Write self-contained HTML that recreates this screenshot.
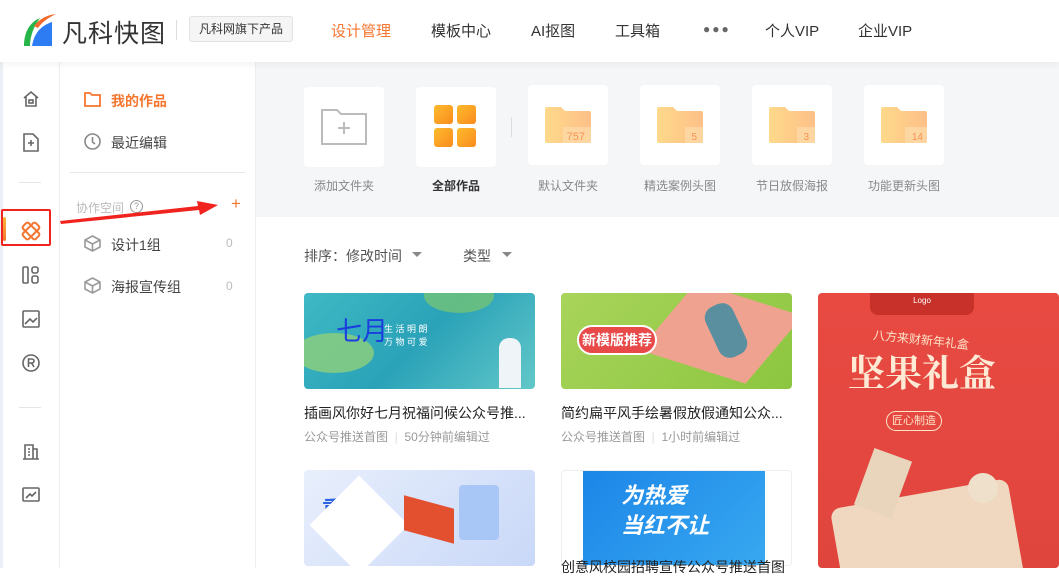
<!DOCTYPE html><html><head><meta charset="utf-8"><style>
*{margin:0;padding:0;box-sizing:border-box}
body{width:1059px;height:568px;overflow:hidden;background:#fff;font-family:"Liberation Sans","Noto Sans CJK SC",sans-serif;position:relative;color:#333}
.a{position:absolute}
.hdr{left:0;top:0;width:1059px;height:62px;background:#fff;box-shadow:0 2px 8px rgba(0,0,0,.06);z-index:2}
.nav{top:20px;font-size:15px;color:#333}
.tile{width:80px;height:80px;background:#fff;border-radius:4px;top:87px}
.tl{top:177px;font-size:12px;color:#888;width:110px;text-align:center}
.card{border-radius:4px;overflow:hidden}
.t{font-size:14px;color:#222}
.m{font-size:12px;color:#999}
</style></head><body>
<div class="a hdr">
<svg class="a" style="left:18px;top:12px" width="40" height="36" viewBox="0 0 40 36"><path d="M6 34 C6 20 12 10 22 6 C16 14 12 24 12 34Z" fill="#27b54a"/><path d="M14 34 C16 22 22 14 34 10 L34 34Z" fill="#2d7cf3"/><path d="M16 14 C22 6 30 3 38 2 C30 6 24 10 20 16Z" fill="#f26b2c"/></svg>
<div class="a" style="left:62px;top:14px;font-size:25px;color:#333;letter-spacing:1px">凡科快图</div>
<div class="a" style="left:176px;top:20px;width:1px;height:20px;background:#ddd"></div>
<div class="a" style="left:189px;top:16px;width:104px;height:26px;border:1px solid #e2e2e2;border-radius:3px;background:#f5f5f5;font-size:12px;line-height:24px;text-align:center;color:#333">凡科网旗下产品</div>
<div class="a nav" style="left:331px;color:#f5762f">设计管理</div>
<div class="a nav" style="left:431px">模板中心</div>
<div class="a nav" style="left:531px">AI抠图</div>
<div class="a nav" style="left:615px">工具箱</div>
<div class="a" style="left:703px;top:22px;font-size:12px;letter-spacing:2px;color:#666">●●●</div>
<div class="a nav" style="left:765px">个人VIP</div>
<div class="a nav" style="left:858px">企业VIP</div>
</div>
<div class="a" style="left:0;top:62px;width:3px;height:506px;background:#eceef5"></div>
<div class="a" style="left:59px;top:62px;width:1px;height:506px;background:#eee"></div>
<div class="a" style="left:255px;top:62px;width:1px;height:506px;background:#eee"></div>
<div class="a" style="left:256px;top:62px;width:803px;height:155px;background:#f5f6f8"></div>
<svg class="a" style="left:22px;top:90px" width="18" height="18" viewBox="0 0 18 18" fill="none" stroke="#666" stroke-width="1.6"><path d="M2 8 L9 2 L16 8 M4 7 V16 H14 V7"/><rect x="7" y="10" width="4" height="3"/></svg>
<svg class="a" style="left:23px;top:133px" width="16" height="19" viewBox="0 0 16 19" fill="none" stroke="#666" stroke-width="1.6"><path d="M1 1 H10 L15 6 V18 H1Z M5 10 H11 M8 7 V13"/></svg>
<div class="a" style="left:19px;top:182px;width:22px;height:1px;background:#e5e5e5"></div>
<div class="a" style="left:1px;top:209px;width:50px;height:37px;border:2px solid #f0231f;border-radius:2px"></div>
<div class="a" style="left:3px;top:217px;width:3px;height:24px;background:linear-gradient(#f7b53a,#f5762f);border-radius:2px"></div>
<svg class="a" style="left:21px;top:221px" width="20" height="20" viewBox="0 0 20 20" fill="none" stroke="#f5762f" stroke-width="2"><rect x="6" y="1" width="8" height="18" rx="2" transform="rotate(45 10 10)"/><rect x="6" y="1" width="8" height="18" rx="2" transform="rotate(-45 10 10)"/></svg>
<svg class="a" style="left:22px;top:266px" width="18" height="18" viewBox="0 0 18 18" fill="none" stroke="#666" stroke-width="1.6"><rect x="1" y="1" width="5" height="16" rx="1"/><rect x="10" y="1" width="6" height="6" rx="2"/><rect x="10" y="10" width="6" height="7" rx="2"/></svg>
<svg class="a" style="left:22px;top:310px" width="18" height="18" viewBox="0 0 18 18" fill="none" stroke="#666" stroke-width="1.6"><rect x="1" y="1" width="16" height="16" rx="1"/><path d="M3 14 L8 9 L11 12 L15 8"/></svg>
<svg class="a" style="left:22px;top:354px" width="18" height="18" viewBox="0 0 18 18" fill="none" stroke="#666" stroke-width="1.6"><circle cx="9" cy="9" r="8"/><path d="M6.5 13 V5 H10 A2 2 0 0 1 10 9 H6.5 M9.5 9 L12 13"/></svg>
<div class="a" style="left:19px;top:407px;width:22px;height:1px;background:#e5e5e5"></div>
<svg class="a" style="left:22px;top:442px" width="18" height="18" viewBox="0 0 18 18" fill="none" stroke="#666" stroke-width="1.6"><path d="M1 17 H17 M3 17 V3 H11 V17 M11 7 H15 V17 M6 7 H8 M6 10 H8 M6 13 H8"/></svg>
<svg class="a" style="left:22px;top:486px" width="18" height="18" viewBox="0 0 18 18" fill="none" stroke="#666" stroke-width="1.6"><rect x="1" y="2" width="16" height="13" rx="1"/><path d="M4 12 L8 8 L10 10 L14 6"/></svg>
<svg class="a" style="left:84px;top:92px" width="17" height="15" viewBox="0 0 17 15" fill="none" stroke="#f5762f" stroke-width="1.8"><path d="M1 1 H6 L8 3 H16 V14 H1Z"/></svg>
<div class="a" style="left:111px;top:91px;font-size:14px;color:#f5762f;font-weight:bold">我的作品</div>
<svg class="a" style="left:84px;top:133px" width="17" height="17" viewBox="0 0 17 17" fill="none" stroke="#888" stroke-width="1.6"><circle cx="8.5" cy="8.5" r="7.5"/><path d="M8.5 4 V9 L11 11"/></svg>
<div class="a" style="left:111px;top:133px;font-size:14px;color:#444">最近编辑</div>
<div class="a" style="left:70px;top:172px;width:175px;height:1px;background:#e8e8e8"></div>
<div class="a" style="left:76px;top:199px;font-size:12px;color:#bbb">协作空间</div>
<div class="a" style="left:130px;top:200px;width:13px;height:13px;border:1px solid #999;border-radius:50%;font-size:9px;line-height:11px;text-align:center;color:#999">?</div>
<div class="a" style="left:231px;top:194px;font-size:17px;color:#f5762f">+</div>
<svg class="a" style="left:84px;top:235px" width="17" height="17" viewBox="0 0 17 17" fill="none" stroke="#999" stroke-width="1.6"><path d="M8.5 1 L16 5 V12 L8.5 16 L1 12 V5Z M1 5 L8.5 9 L16 5 M8.5 9 V16"/></svg>
<div class="a" style="left:111px;top:235px;font-size:14px;color:#444">设计1组</div>
<div class="a" style="left:226px;top:236px;font-size:12px;color:#bbb">0</div>
<svg class="a" style="left:84px;top:277px" width="17" height="17" viewBox="0 0 17 17" fill="none" stroke="#999" stroke-width="1.6"><path d="M8.5 1 L16 5 V12 L8.5 16 L1 12 V5Z M1 5 L8.5 9 L16 5 M8.5 9 V16"/></svg>
<div class="a" style="left:111px;top:277px;font-size:14px;color:#444">海报宣传组</div>
<div class="a" style="left:226px;top:279px;font-size:12px;color:#bbb">0</div>
<svg class="a" style="left:58px;top:198px;z-index:3" width="165" height="30" viewBox="0 0 165 30"><path d="M2 23 L140 8 L139 3 L160 7 L142 17 L141 12 L3 26Z" fill="#f0231f"/></svg>
<div class="a tile" style="left:304px"><svg class="a" style="left:17px;top:22px" width="46" height="36" viewBox="0 0 46 36" fill="none" stroke="#bbb" stroke-width="2"><path d="M1 1 H16 L20 5 H45 V35 H1Z M23 13 V25 M17 19 H29"/></svg></div>
<div class="a tl" style="left:289px">添加文件夹</div>
<div class="a tile" style="left:416px"><svg class="a" style="left:18px;top:18px" width="44" height="44"><defs><linearGradient id="g" x1="0" y1="0" x2="1" y2="1"><stop offset="0" stop-color="#fdbb2d"/><stop offset="1" stop-color="#f98b1e"/></linearGradient></defs><rect width="19" height="19" rx="3" fill="url(#g)"/><rect x="23" width="19" height="19" rx="3" fill="url(#g)"/><rect y="23" width="19" height="19" rx="3" fill="url(#g)"/><rect x="23" y="23" width="19" height="19" rx="3" fill="url(#g)"/></svg></div>
<div class="a tl" style="left:401px;color:#333;font-weight:bold">全部作品</div>
<div class="a" style="left:511px;top:117px;width:1px;height:20px;background:#ddd"></div>
<div class="a tile" style="left:528px;top:85px"></div>
<div class="a tile" style="left:640px;top:85px"></div>
<div class="a tile" style="left:752px;top:85px"></div>
<div class="a tile" style="left:864px;top:85px"></div>
<svg width="0" height="0" class="a"><defs><linearGradient id="f" x1="0" x2="1"><stop offset="0" stop-color="#fed98a"/><stop offset="1" stop-color="#fdc088"/></linearGradient></defs></svg>
<div class="a" style="left:545px;top:107px"><svg width="46" height="36"><path d="M0 2 Q0 0 2 0 H16 L20 4 H44 Q46 4 46 6 V34 Q46 36 44 36 H2 Q0 36 0 34Z" fill="url(#f)"/><rect x="18" y="20" width="28" height="16" fill="#fdd9a8" opacity=".8"/><text x="40" y="33" font-size="11" fill="#f79454" text-anchor="end" font-family="Liberation Sans">757</text></svg></div>
<div class="a" style="left:657px;top:107px"><svg width="46" height="36"><path d="M0 2 Q0 0 2 0 H16 L20 4 H44 Q46 4 46 6 V34 Q46 36 44 36 H2 Q0 36 0 34Z" fill="url(#f)"/><rect x="28" y="20" width="18" height="16" fill="#fdd9a8" opacity=".8"/><text x="40" y="33" font-size="10" fill="#f79454" text-anchor="end" font-family="Liberation Sans">5</text></svg></div>
<div class="a" style="left:769px;top:107px"><svg width="46" height="36"><path d="M0 2 Q0 0 2 0 H16 L20 4 H44 Q46 4 46 6 V34 Q46 36 44 36 H2 Q0 36 0 34Z" fill="url(#f)"/><rect x="28" y="20" width="18" height="16" fill="#fdd9a8" opacity=".8"/><text x="40" y="33" font-size="10" fill="#f79454" text-anchor="end" font-family="Liberation Sans">3</text></svg></div>
<div class="a" style="left:881px;top:107px"><svg width="46" height="36"><path d="M0 2 Q0 0 2 0 H16 L20 4 H44 Q46 4 46 6 V34 Q46 36 44 36 H2 Q0 36 0 34Z" fill="url(#f)"/><rect x="24" y="20" width="22" height="16" fill="#fdd9a8" opacity=".8"/><text x="42" y="33" font-size="10" fill="#f79454" text-anchor="end" font-family="Liberation Sans">14</text></svg></div>
<div class="a tl" style="left:513px">默认文件夹</div>
<div class="a tl" style="left:625px">精选案例头图</div>
<div class="a tl" style="left:737px">节日放假海报</div>
<div class="a tl" style="left:849px">功能更新头图</div>
<div class="a" style="left:304px;top:246px;font-size:14px;color:#555">排序：修改时间</div>
<div class="a" style="left:412px;top:252px;border:5px solid transparent;border-top:5px solid #888"></div>
<div class="a" style="left:463px;top:246px;font-size:14px;color:#555">类型</div>
<div class="a" style="left:502px;top:252px;border:5px solid transparent;border-top:5px solid #888"></div>
<div class="a card" style="left:304px;top:293px;width:231px;height:96px;background:linear-gradient(135deg,#3fb9c4,#2aa2b8 50%,#62c8c9)">
<div class="a" style="left:-10px;top:40px;width:80px;height:40px;border-radius:50%;background:#8fd07a;opacity:.8"></div>
<div class="a" style="left:120px;top:-15px;width:70px;height:35px;border-radius:50%;background:#7cc86d;opacity:.7"></div>
<div class="a" style="left:32px;top:18px;font-size:26px;color:#1a3ee0">七月</div>
<div class="a" style="left:80px;top:30px;font-size:9px;color:#fff;line-height:13px">生 活 明 朗<br>万 物 可 爱</div>
<div class="a" style="left:195px;top:45px;width:22px;height:50px;border-radius:10px 10px 0 0;background:#eef4f8"></div></div>
<div class="a t" style="left:304px;top:403px">插画风你好七月祝福问候公众号推...</div>
<div class="a m" style="left:304px;top:428px">公众号推送首图 <span style="color:#ddd">&nbsp;|&nbsp;</span> 50分钟前编辑过</div>
<div class="a card" style="left:561px;top:293px;width:231px;height:96px;background:linear-gradient(135deg,#a8d45a,#8cc640)">
<div class="a" style="left:95px;top:5px;width:130px;height:70px;background:#f0a290;transform:skewX(-30deg) rotate(15deg)"></div>
<div class="a" style="left:150px;top:10px;width:30px;height:55px;background:#5a8fa0;border-radius:12px;transform:rotate(-25deg)"></div>
<div class="a" style="left:16px;top:32px;width:80px;height:30px;border-radius:15px;background:#e84a4a;border:2px solid #fff;color:#fff;font-size:14px;line-height:26px;text-align:center;font-weight:bold">新模版推荐</div></div>
<div class="a t" style="left:561px;top:403px">简约扁平风手绘暑假放假通知公众...</div>
<div class="a m" style="left:561px;top:428px">公众号推送首图 <span style="color:#ddd">&nbsp;|&nbsp;</span> 1小时前编辑过</div>
<div class="a card" style="left:818px;top:293px;width:241px;height:275px;background:linear-gradient(#e84a42,#e0453d)">
<div class="a" style="left:52px;top:0;width:104px;height:22px;background:#c8302a;border-radius:0 0 8px 8px;color:#fff;font-size:8px;text-align:center;line-height:16px">Logo</div>
<div class="a" style="left:55px;top:38px;font-size:12px;color:#fde3c8;transform:rotate(6deg)">八方来财新年礼盒</div>
<div class="a" style="left:30px;top:50px;font-size:37px;color:#fde9d4;font-family:'Noto Serif CJK SC',serif;font-weight:bold">坚果礼盒</div>
<div class="a" style="left:68px;top:118px;width:56px;height:20px;border:1px solid #fde3c8;border-radius:10px;color:#fde3c8;font-size:11px;line-height:18px;text-align:center">匠心制造</div>
<div class="a" style="left:20px;top:200px;width:180px;height:110px;background:#f0d8c0;transform:rotate(-10deg);border-radius:10px"></div>
<div class="a" style="left:45px;top:160px;width:40px;height:60px;background:#e8d5bc;transform:rotate(20deg)"></div>
<div class="a" style="left:150px;top:180px;width:30px;height:30px;background:#efe0cc;border-radius:50%"></div></div>
<div class="a card" style="left:304px;top:470px;width:231px;height:96px;background:linear-gradient(135deg,#e8effc,#c9d8f8)">
<div class="a" style="left:18px;top:22px;font-size:22px;color:#2b63e3;font-weight:bold">重</div>
<div class="a" style="left:20px;top:20px;width:70px;height:70px;background:#fff;transform:rotate(45deg)"></div>
<div class="a" style="left:100px;top:32px;width:50px;height:35px;background:#e25030;transform:skewY(15deg)"></div>
<div class="a" style="left:155px;top:15px;width:40px;height:55px;background:#9ec0f5;border-radius:4px;opacity:.8"></div></div>
<div class="a" style="left:561px;top:470px;width:231px;height:96px;border:1px solid #eee;border-radius:4px;background:#fff">
<div class="a" style="left:21px;top:0;width:182px;height:94px;background:linear-gradient(135deg,#1c86e8,#38a8f0);color:#fff;font-size:22px;font-weight:bold;font-style:italic;padding:10px 0 0 38px;line-height:30px">为热爱<br>当红不让</div></div>
<div class="a t" style="left:561px;top:557px">创意风校园招聘宣传公众号推送首图</div>
</body></html>
